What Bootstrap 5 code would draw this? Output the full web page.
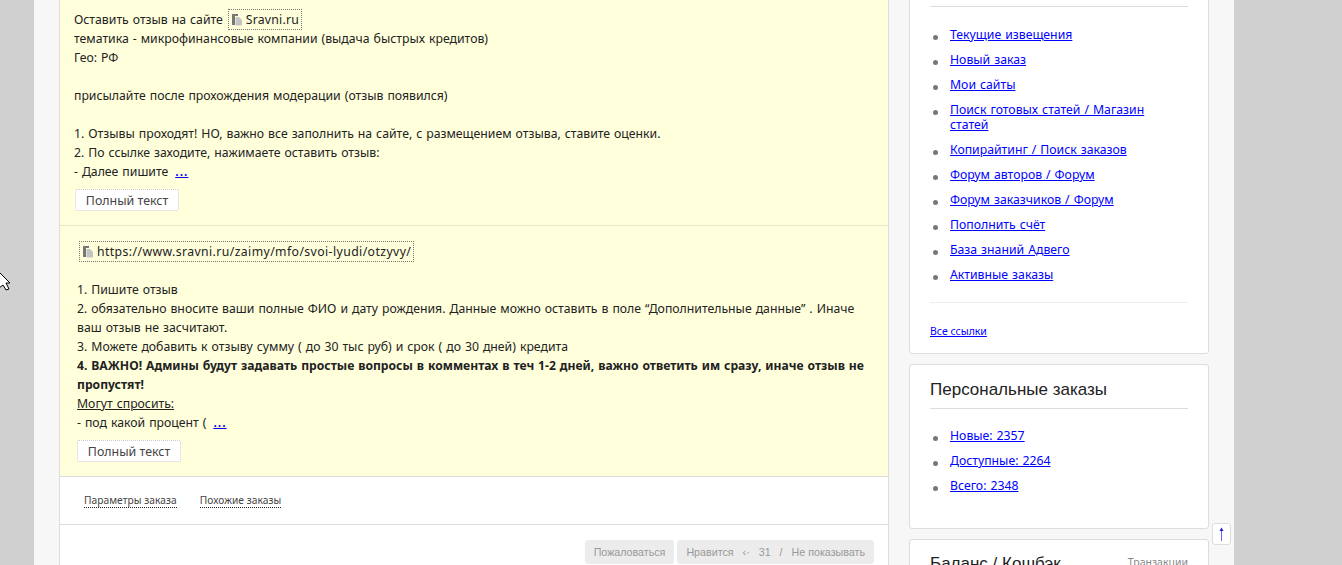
<!DOCTYPE html>
<html lang="ru"><head><meta charset="utf-8"><title>Заказ</title>
<link href="https://cdn.jsdelivr.net/npm/bootstrap@5.3.0/dist/css/bootstrap.min.css" rel="stylesheet">
<style>
html,body{height:565px;overflow:hidden}
body{background:#d0d0d0;font-family:"Noto Sans",sans-serif;font-size:12.25px;word-spacing:.8px;line-height:19px;color:#222}
a{color:#00f}
.shell{margin-left:34px;width:1200px;height:565px;background:#f7f7f7;padding-left:25px;gap:20px;overflow:hidden}
.main-col{width:830px;flex:none;background:#fff;border-left:1px solid #ddd;border-right:1px solid #ddd;height:565px}
.task{background:#ffffdc}
.task-a{padding:10px 14px 14px;border-bottom:1px solid #e6e6c8}
.task-b{padding:16px 17px 14px;border-bottom:1px solid #ddd;height:251px}
.chip{border:1px dotted #777;padding:1px 2px 1px 2px;margin:0 1px 0 1px;letter-spacing:.2px}
.chip-url{letter-spacing:.4px;margin-left:2px}
.chip svg{vertical-align:-2px;margin-right:3px}
.more-link{margin-left:3px;font-weight:600;letter-spacing:1px}
.full-btn{display:block;width:104px;height:22px;margin:8px 0 0 1px;padding:0;border:1px dotted #ccc;border-radius:2px;background:#fff;color:#444;font-size:12.4px;word-spacing:0;line-height:19px}
.full-btn:hover{background:#fff;color:#444;border-color:#ccc}
.task-b .full-btn{margin-left:0}
.b-text{font-weight:700;font-size:12.15px}
.tabs{height:48px;padding:1px 0 0 24px;gap:23px;border-bottom:1px solid #ddd;font-size:10.2px;word-spacing:0;letter-spacing:.06px;color:#444}
.tabs span{border-bottom:1px dotted #222;line-height:13px}
.actions{padding:15px 14px 0 0;gap:3px;font-family:"Liberation Sans",sans-serif;font-size:10.7px;word-spacing:0;color:#999}
.act{height:24px;padding:0 9px;background:#ececec;border-radius:3px;gap:9px}
.side-col{width:300px;flex:none;gap:10px}
.side-card{flex:none;border:1px solid #ddd;border-radius:3px;padding:0 20px;background:#fff}
.first-card{height:364px;margin-top:-10px;padding-top:15px}
.second-card{height:165px;padding-top:13px}
.third-card{height:60px;padding-top:12px}
.side-title{font-family:"Liberation Sans",sans-serif;font-size:17px;word-spacing:0;line-height:24px;color:#222;height:31px;border-bottom:1px solid #ddd}
.third-card .side-title{border:0}
.trans{font-size:10.5px;word-spacing:0;color:#888;line-height:20px}
.rule{border-bottom:1px solid #ddd}
.rule-soft{border-bottom:1px solid #eee}
.link-list{padding:20px 30px 0 0;margin:0}
.first-card .link-list{padding-bottom:10px}
.second-card .link-list{padding-top:19px}
.link-list li{position:relative;padding-left:20px;margin-bottom:10px;line-height:15px}
.link-list li::before{content:"";position:absolute;left:3px;top:8px;width:5px;height:5px;border-radius:50%;background:#777}
.all-links{font-size:10.5px;word-spacing:0;line-height:14px;margin-top:21px;display:block}
.to-top{position:absolute;left:1212px;top:523px;width:19px;height:22px;background:#fff;border:1px solid #ddd;border-radius:3px;display:flex;align-items:center;justify-content:center}
.cursor{position:absolute;left:0;top:268px}
</style></head>
<body>
<svg class="cursor" width="12" height="24" viewBox="0 0 12 24"><path d="M-3 2 L10 15 L6 15 L9 21 L6 22 L3 17 L-1 20Z" fill="#fff" stroke="#000" stroke-width="1"/></svg>
<div class="shell d-flex">
  <div class="main-col">
    <div class="task">
      <div class="task-a">
        Оставить отзыв на сайте <span class="chip"><svg width="12" height="13" viewBox="0 0 12 13"><path d="M1 1h6v2H4v9H1z" fill="#777"/><path d="M4.5 4H8l3 3v5.5H4.5z" fill="#c4c4c4"/></svg>Sravni.ru</span><br>
        тематика - микрофинансовые компании (выдача быстрых кредитов)<br>
        Гео: РФ<br><br>
        присылайте после прохождения модерации (отзыв появился)<br><br>
        1. Отзывы проходят! НО, важно все заполнить на сайте, с размещением отзыва, ставите оценки.<br>
        2. По ссылке заходите, нажимаете оставить отзыв:<br>
        - Далее пишите <a href="#" class="more-link">...</a>
        <button type="button" class="btn full-btn">Полный текст</button>
      </div>
      <div class="task-b">
        <span class="chip chip-url"><svg width="12" height="13" viewBox="0 0 12 13"><path d="M1 1h6v2H4v9H1z" fill="#777"/><path d="M4.5 4H8l3 3v5.5H4.5z" fill="#c4c4c4"/></svg>https://www.sravni.ru/zaimy/mfo/svoi-lyudi/otzyvy/</span><br><br>
        1. Пишите отзыв<br>
        2. обязательно вносите ваши полные ФИО и дату рождения. Данные можно оставить в поле “Дополнительные данные” . Иначе ваш отзыв не засчитают.<br>
        3. Можете добавить к отзыву сумму ( до 30 тыс руб) и срок ( до 30 дней) кредита<br>
        <b class="b-text">4. ВАЖНО! Админы будут задавать простые вопросы в комментах в теч 1-2 дней, важно ответить им сразу, иначе отзыв не пропустят!</b><br>
        <u>Могут спросить:</u><br>
        - под какой процент ( <a href="#" class="more-link">...</a>
        <button type="button" class="btn full-btn">Полный текст</button>
      </div>
    </div>
    <div class="tabs d-flex align-items-center"><span>Параметры заказа</span><span>Похожие заказы</span></div>
    <div class="actions d-flex justify-content-end">
      <div class="act d-flex align-items-center">Пожаловаться</div>
      <div class="act d-flex align-items-center"><span>Нравится</span><span>‹·</span><span>31</span><span>/</span><span>Не показывать</span></div>
    </div>
  </div>
  <div class="side-col d-flex flex-column">
    <div class="card side-card first-card">
      <div class="rule"></div>
      <ul class="link-list list-unstyled rule-soft">
        <li><a href="#">Текущие извещения</a></li>
        <li><a href="#">Новый заказ</a></li>
        <li><a href="#">Мои сайты</a></li>
        <li><a href="#">Поиск готовых статей / Магазин статей</a></li>
        <li><a href="#">Копирайтинг / Поиск заказов</a></li>
        <li><a href="#">Форум авторов / Форум</a></li>
        <li><a href="#">Форум заказчиков / Форум</a></li>
        <li><a href="#">Пополнить счёт</a></li>
        <li><a href="#">База знаний Адвего</a></li>
        <li><a href="#">Активные заказы</a></li>
      </ul>
      <a href="#" class="all-links">Все ссылки</a>
    </div>
    <div class="card side-card second-card">
      <div class="side-title">Персональные заказы</div>
      <ul class="link-list list-unstyled">
        <li><a href="#">Новые: 2357</a></li>
        <li><a href="#">Доступные: 2264</a></li>
        <li><a href="#">Всего: 2348</a></li>
      </ul>
    </div>
    <div class="card side-card third-card">
      <div class="d-flex justify-content-between"><div class="side-title">Баланс / Кошбэк</div><div class="trans">Транзакции</div></div>
    </div>
  </div>
</div>
<a href="#" class="to-top" aria-label="Наверх"><svg width="7" height="14" viewBox="0 0 7 14"><path d="M3.5 2v12" stroke="#6666ff" stroke-width="1"/><path d="M3.5 0.5 L5.5 4 H1.5Z" fill="#2222dd"/></svg></a>
</body></html>
